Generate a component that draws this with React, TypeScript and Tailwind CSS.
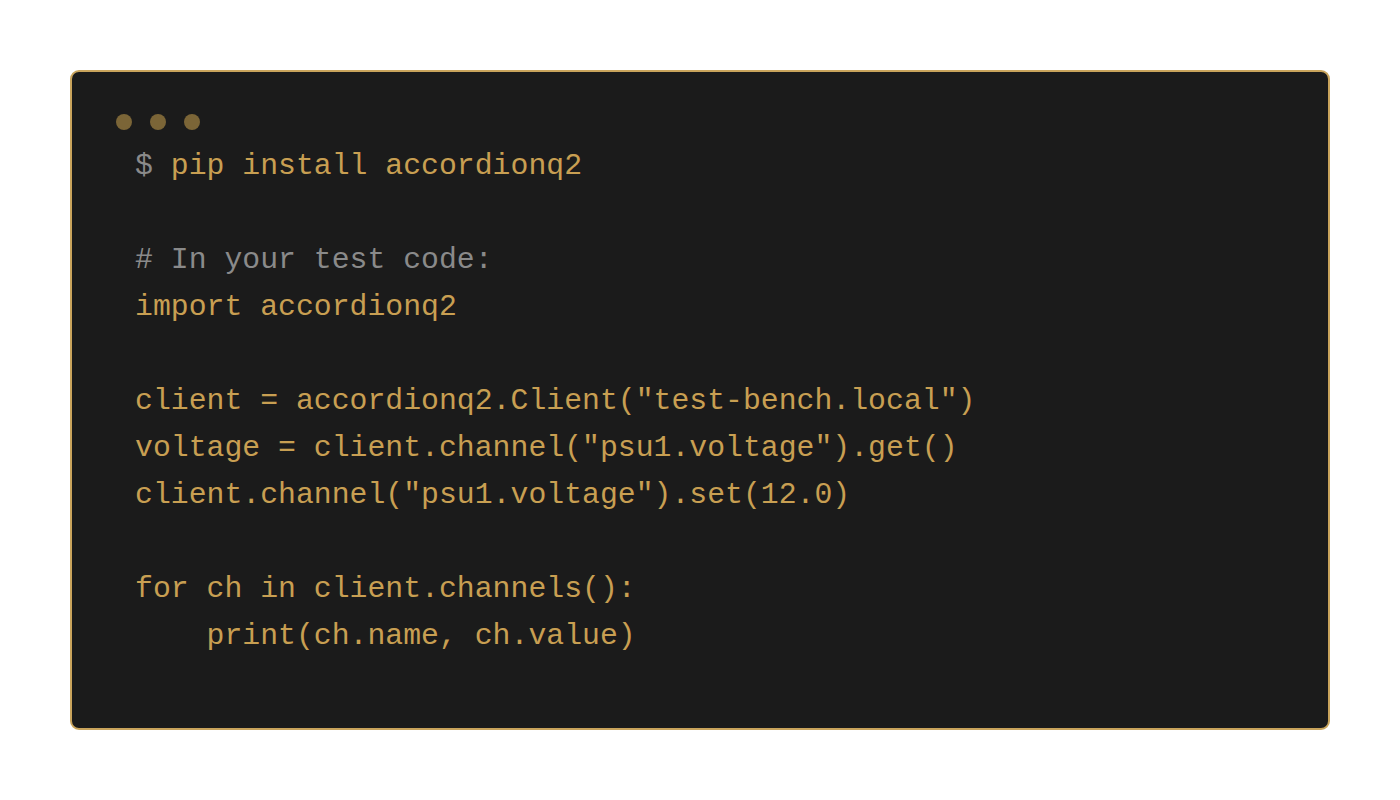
import React from 'react';

const lines: { text: string; tone?: 'comment' | 'prompt' }[] = [
  { text: 'pip install accordionq2', tone: 'prompt' },
  { text: '' },
  { text: '# In your test code:', tone: 'comment' },
  { text: 'import accordionq2' },
  { text: '' },
  { text: 'client = accordionq2.Client("test-bench.local")' },
  { text: 'voltage = client.channel("psu1.voltage").get()' },
  { text: 'client.channel("psu1.voltage").set(12.0)' },
  { text: '' },
  { text: 'for ch in client.channels():' },
  { text: '    print(ch.name, ch.value)' },
];

const App = () => {
  return (
    <div className="min-h-screen bg-white p-[70px]">
      <div className="h-[660px] rounded-[9px] border-2 border-[#c9a45c] bg-[#1b1b1b] pt-[42px] pl-[44px]">
        {/* window dots */}
        <div className="flex gap-[18px]">
          <span className="h-4 w-4 rounded-full bg-[#7b6537]" />
          <span className="h-4 w-4 rounded-full bg-[#7b6537]" />
          <span className="h-4 w-4 rounded-full bg-[#7b6537]" />
        </div>

        <pre className="ml-[19px] mt-[13px] font-['Courier_New','Nimbus_Mono_PS','FreeMono',Courier,'Liberation_Mono',monospace] text-[29.8px] leading-[47px] text-[#c89f52]">
          {lines.map((line, i) => (
            <div key={i} className="h-[47px]">
              {line.tone === 'prompt' ? (
                <>
                  <span className="text-[#8a8a8a]">$ </span>
                  {line.text}
                </>
              ) : line.tone === 'comment' ? (
                <span className="text-[#8a8a8a]">{line.text}</span>
              ) : (
                line.text
              )}
            </div>
          ))}
        </pre>
      </div>
    </div>
  );
};

export default App;
